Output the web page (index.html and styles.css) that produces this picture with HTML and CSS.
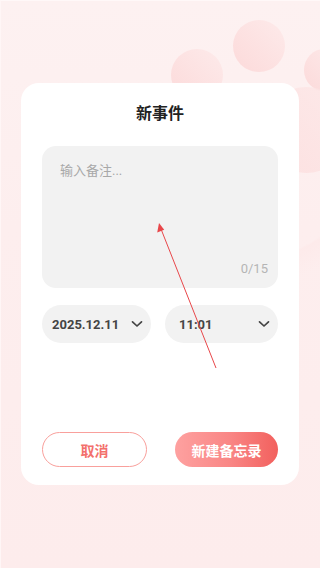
FILE: index.html
```html
<!DOCTYPE html>
<html lang="zh-CN">
<head>
<meta charset="utf-8">
<title>新事件</title>
<link rel="stylesheet" href="styles.css">
</head>
<body>
<div class="screen">
  <div class="decor">
    <span class="ring"></span>
    <span class="bubble bubble-a"></span>
    <span class="bubble bubble-b"></span>
    <span class="bubble bubble-c"></span>
    <span class="bubble bubble-d"></span>
  </div>

  <div class="card">
    <h1 class="title">新事件</h1>
    <div class="note">
      <div class="placeholder">输入备注...</div>
      <div class="counter">0/15</div>
    </div>
    <div class="pickers">
      <div class="picker picker-date">
        <span class="picker-text">2025.12.11</span>
        <svg class="chev" width="12" height="8" viewBox="0 0 12 8"><path d="M1.5 1.8 L6 6 L10.5 1.8" fill="none" stroke="#444" stroke-width="1.7" stroke-linecap="round" stroke-linejoin="round"/></svg>
      </div>
      <div class="picker picker-time">
        <span class="picker-text">11:01</span>
        <svg class="chev" width="12" height="8" viewBox="0 0 12 8"><path d="M1.5 1.8 L6 6 L10.5 1.8" fill="none" stroke="#444" stroke-width="1.7" stroke-linecap="round" stroke-linejoin="round"/></svg>
      </div>
    </div>
    <div class="actions">
      <button class="btn btn-cancel">取消</button>
      <button class="btn btn-create">新建备忘录</button>
    </div>
  </div>

  <svg class="arrow" width="320" height="568" viewBox="0 0 320 568">
    <line x1="215" y1="367" x2="160" y2="228" stroke="#e8474a" stroke-width="1"/>
    <polygon points="158,222 156.2,231.5 163.2,228.8" fill="#e8474a"/>
  </svg>
</div>
</body>
</html>
```
FILE: styles.css
```css
* { box-sizing: border-box; }
html, body { margin: 0; padding: 0; }
body {
  width: 320px;
  height: 568px;
  overflow: hidden;
  font-family: Roboto, "Noto Sans CJK SC", sans-serif;
}
.screen {
  position: relative;
  width: 320px;
  height: 568px;
  background: linear-gradient(180deg, #fdf1f1 0%, #fdeeee 40%, #fdecec 100%);
  border-top: 1px solid #fff8f8;
  border-left: 1px solid #fff6f6;
  overflow: hidden;
  padding-top: 82px;
  padding-left: 20px;
}
.decor { position: absolute; inset: 0; pointer-events: none; }
.ring {
  position: absolute;
  left: 140px; top: 22px;
  width: 260px; height: 260px;
  border-radius: 50%;
  background: radial-gradient(circle at 40% 40%, rgba(255,255,255,0.0) 0%, rgba(255,255,255,0.0) 60%, rgba(253,232,232,0.6) 61%, rgba(253,232,232,0.0) 72%);
}
.bubble {
  position: absolute;
  border-radius: 50%;
  background: linear-gradient(225deg, #fdeaea 0%, #fcdada 100%);
}
.bubble-a { left: 232px; top: 19px; width: 52px; height: 52px; }
.bubble-b { left: 170px; top: 48px; width: 52px; height: 52px; }
.bubble-c { left: 303px; top: 48px; width: 40px; height: 42px; }
.bubble-d { left: 262px; top: 86px; width: 86px; height: 86px; background: linear-gradient(225deg, #fde6e6 0%, #fcdcdc 100%); opacity: 0.75; }
.card {
  position: relative;
  width: 278px;
  height: 402px;
  background: #fff;
  border-radius: 18px;
  padding: 20px 21px 18px;
  display: flex;
  flex-direction: column;
}
.title {
  margin: 0;
  font-size: 16px;
  line-height: 22px;
  font-weight: 600;
  color: #222;
  text-align: center;
}
.note {
  margin-top: 21px;
  height: 142px;
  background: #f2f2f2;
  border-radius: 14px;
  padding: 16px 10px 10px 18px;
  display: flex;
  flex-direction: column;
  justify-content: space-between;
}
.placeholder {
  font-size: 13px;
  line-height: 18px;
  color: #a8a8a8;
}
.counter {
  align-self: flex-end;
  font-size: 13px;
  line-height: 18px;
  color: #b5b5b5;
}
.pickers {
  margin-top: 17px;
  display: flex;
  gap: 14px;
}
.picker {
  flex: 1 1 0;
  min-width: 0;
  height: 38px;
  border-radius: 19px;
  background: #f2f2f2;
  display: flex;
  align-items: center;
  justify-content: space-between;
  padding-right: 8px;
}
.picker-date { padding-left: 10px; }
.picker-time { padding-left: 14px; }
.picker-text {
  font-size: 13px;
  font-weight: 700;
  color: #444;
}
.chev { display: block; }
.actions {
  margin-top: auto;
  display: flex;
  gap: 28px;
}
.btn {
  flex: 1 1 0;
  height: 35px;
  border-radius: 18px;
  font-family: Roboto, "Noto Sans CJK SC", sans-serif;
  font-size: 14px;
  font-weight: 600;
  padding: 0;
  cursor: pointer;
}
.btn-cancel {
  background: #fff;
  border: 1px solid #f9a09c;
  color: #f3706c;
}
.btn-create {
  border: none;
  color: #fff;
  background: linear-gradient(90deg, #fea1a0 0%, #f98584 55%, #f2605d 100%);
}
.arrow {
  position: absolute;
  left: 0; top: 0;
  pointer-events: none;
}
```
